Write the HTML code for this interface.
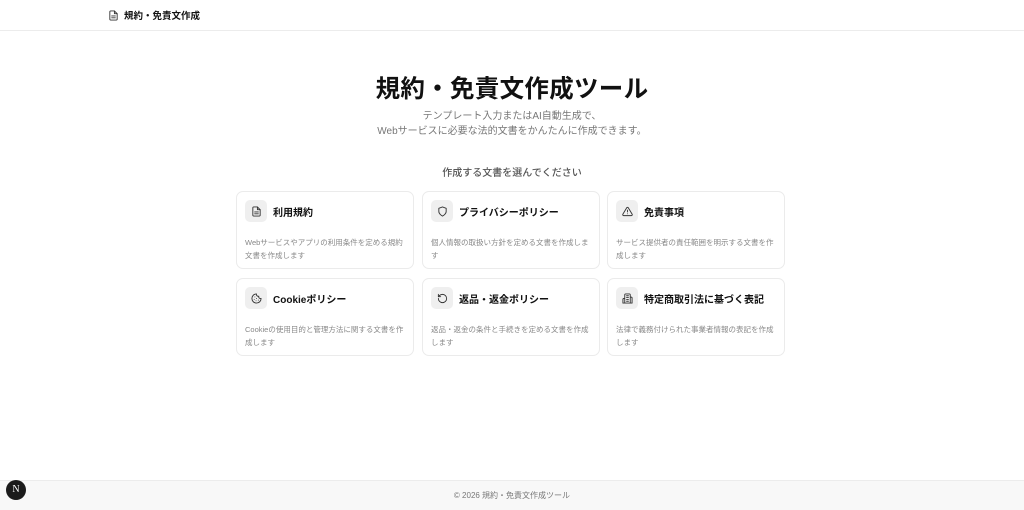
<!DOCTYPE html>
<html><head><meta charset="utf-8"><style>
*{box-sizing:border-box;margin:0;padding:0}
body{width:1024px;height:510px;background:#fff;font-family:"Liberation Sans","Noto Sans CJK JP",sans-serif;color:#111;position:relative;overflow:hidden}
.hdr{height:31px;border-bottom:1px solid #ececec;display:flex;align-items:center;padding-left:108px;font-size:9.5px;font-weight:700;gap:5px}
h1{position:absolute;top:70px;width:100%;text-align:center;font-size:24.5px;font-weight:700;letter-spacing:0.3px}
.sub{position:absolute;top:109px;width:100%;text-align:center;font-size:10px;color:#777;line-height:15px}
.lbl{position:absolute;top:164px;width:100%;text-align:center;font-size:10px;color:#555;font-weight:500}
.card{position:absolute;width:178px;height:78px;border:1px solid #ebebeb;border-radius:7px;background:#fff}
.ic{position:absolute;left:8px;top:8px;width:22px;height:22px;border-radius:5px;background:#efefef;display:flex;align-items:center;justify-content:center}
.t{position:absolute;left:36px;top:12px;font-size:10px;font-weight:700}
.d{position:absolute;left:8px;top:44px;right:8px;font-size:7.5px;color:#888;line-height:13px}
.ftr{position:absolute;top:480px;left:0;width:100%;height:30px;background:#f8f8f8;border-top:1px solid #ececec;text-align:center;font-size:8px;color:#777;line-height:29px}
.n{position:absolute;left:6px;top:480px;width:20px;height:20px;border-radius:50%;background:#1b1b1b;color:#fff;font-size:10px;text-align:center;line-height:20px;font-family:"Liberation Serif",serif}
svg{width:11px;height:11px;fill:none;stroke:#333;stroke-width:2;stroke-linecap:round;stroke-linejoin:round}
</style></head><body>
<div class="hdr"><svg viewBox="0 0 24 24"><path d="M14 2H6a2 2 0 0 0-2 2v16a2 2 0 0 0 2 2h12a2 2 0 0 0 2-2V8z"/><path d="M14 2v6h6M8 13h8M8 17h8"/></svg>規約・免責文作成</div>
<h1>規約・免責文作成ツール</h1>
<div class="sub">テンプレート入力またはAI自動生成で、<br>Webサービスに必要な法的文書をかんたんに作成できます。</div>
<div class="lbl">作成する文書を選んでください</div>

<div class="card" style="left:236px;top:191px"><div class="ic"><svg viewBox="0 0 24 24"><path d="M14 2H6a2 2 0 0 0-2 2v16a2 2 0 0 0 2 2h12a2 2 0 0 0 2-2V8z"/><path d="M14 2v6h6M8 13h8M8 17h8"/></svg></div><div class="t">利用規約</div><div class="d">Webサービスやアプリの利用条件を定める規約文書を作成します</div></div>
<div class="card" style="left:422px;top:191px"><div class="ic"><svg viewBox="0 0 24 24"><path d="M12 22s8-4 8-10V5l-8-3-8 3v7c0 6 8 10 8 10z"/></svg></div><div class="t">プライバシーポリシー</div><div class="d">個人情報の取扱い方針を定める文書を作成します</div></div>
<div class="card" style="left:607px;top:191px"><div class="ic"><svg viewBox="0 0 24 24"><path d="M10.3 3.9L1.8 18a2 2 0 0 0 1.7 3h17a2 2 0 0 0 1.7-3L13.7 3.9a2 2 0 0 0-3.4 0zM12 9v4M12 17h.01"/></svg></div><div class="t">免責事項</div><div class="d">サービス提供者の責任範囲を明示する文書を作成します</div></div>
<div class="card" style="left:236px;top:278px"><div class="ic"><svg viewBox="0 0 24 24"><path d="M12 2a10 10 0 1 0 10 10 4 4 0 0 1-5-5 4 4 0 0 1-5-5"/><path d="M8.5 8.5h.01M16 15.5h.01M12 12h.01M11 17h.01M7 14h.01"/></svg></div><div class="t">Cookieポリシー</div><div class="d">Cookieの使用目的と管理方法に関する文書を作成します</div></div>
<div class="card" style="left:422px;top:278px"><div class="ic"><svg viewBox="0 0 24 24"><path d="M3 12a9 9 0 1 0 9-9 9.75 9.75 0 0 0-6.74 2.74L3 8"/><path d="M3 3v5h5"/></svg></div><div class="t">返品・返金ポリシー</div><div class="d">返品・返金の条件と手続きを定める文書を作成します</div></div>
<div class="card" style="left:607px;top:278px"><div class="ic"><svg viewBox="0 0 24 24"><path d="M6 22V4a2 2 0 0 1 2-2h8a2 2 0 0 1 2 2v18zM6 12H4a2 2 0 0 0-2 2v8h4M18 9h2a2 2 0 0 1 2 2v11h-4M10 6h4M10 10h4M10 14h4M10 18h4"/></svg></div><div class="t">特定商取引法に基づく表記</div><div class="d">法律で義務付けられた事業者情報の表記を作成します</div></div>

<div class="ftr">© 2026 規約・免責文作成ツール</div>
<div class="n">N</div>
</body></html>
